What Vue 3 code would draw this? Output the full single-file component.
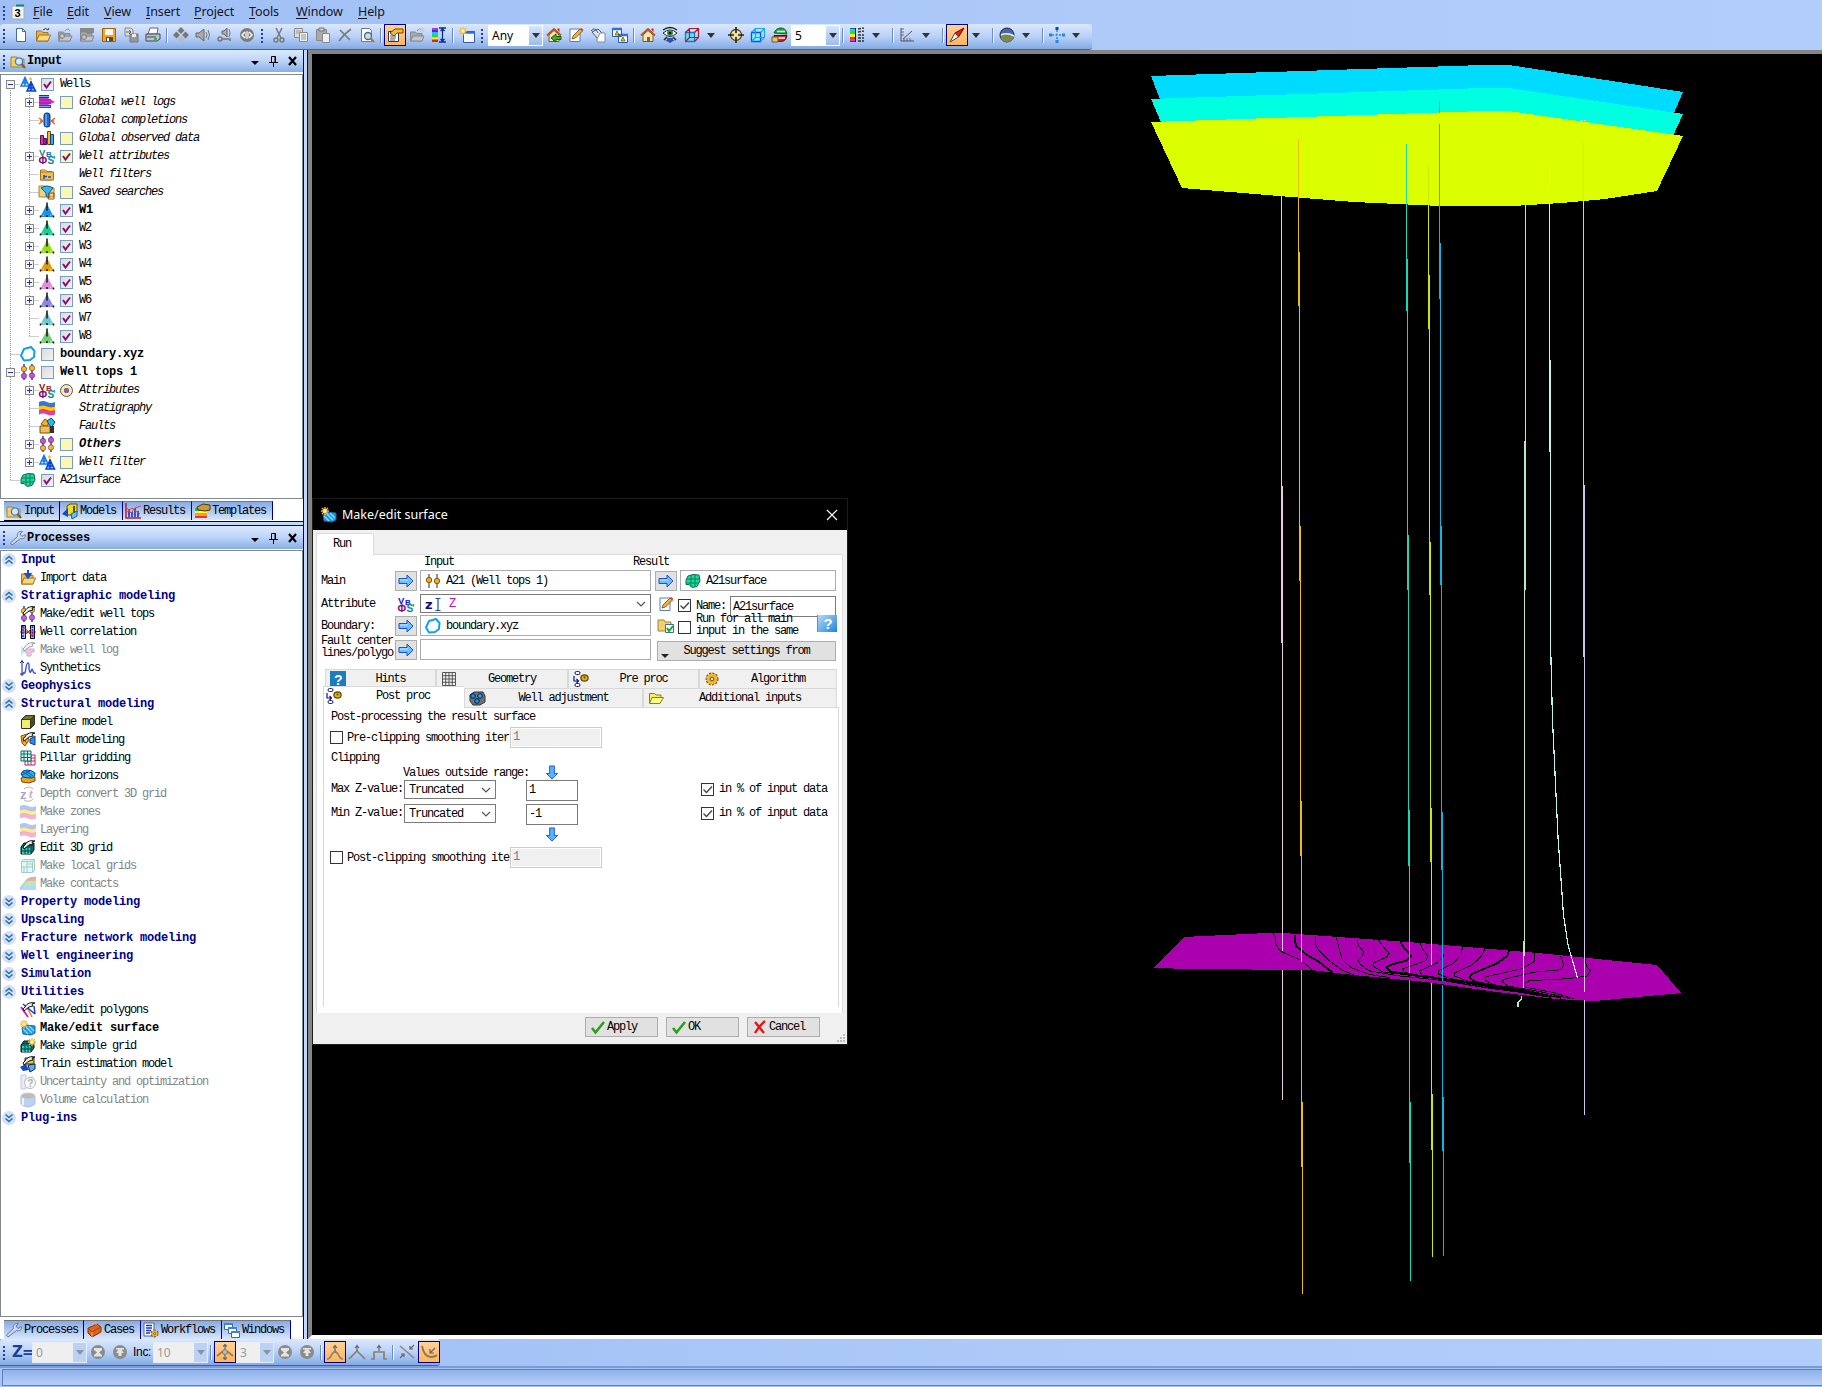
<script setup>
const derrick = (c) => `<path d="M8 3.500L2.500 14M8 3.500L13.500 14M6 7.500h4M5 9.800h6M4 12h8M1.500 14.200h13M6.500 7l4 3M9.500 7l-4 3M5 10l6 3.500M11 10l-6 3.500" stroke="${c}" stroke-width="1.500" fill="none"/><path d="M8 .5v8M8 13v2M1.500 13.500v2M14.500 13.500v2" stroke="#111" stroke-width="1.500"/>`
const wells2 = `<path d="M5 1.500L1 10h8zM5 1v9M2.500 7h5M3.500 4.500h3" stroke="#1277ee" stroke-width="1.500" fill="none"/><path d="M11 6L7 15h8.500zM11 5v10M8.500 12h5M9.500 9h3" stroke="#0a3fd0" stroke-width="1.500" fill="#7fd0ff"/><circle cx="10.500" cy="2.800" r="1.500" fill="#ffc020"/>`
const beads = (a, b) => `<path d="M4 0v16M12 0v16" stroke="#25b" stroke-width="1.600"/><circle cx="4" cy="5" r="2.700" fill="${a}" stroke="#633" stroke-width=".6"/><circle cx="12" cy="4" r="2.700" fill="${a}" stroke="#633" stroke-width=".6"/><circle cx="4" cy="12" r="2.700" fill="${b}" stroke="#536" stroke-width=".6"/><circle cx="12" cy="11.500" r="2.700" fill="${b}" stroke="#536" stroke-width=".6"/>`
const attrs = (a, b, c, d) => `<g font-family="Liberation Sans" font-weight="bold"><text x="0" y="7.500" font-size="9.500" fill="${a}">V</text><text x="7" y="8.500" font-size="8" fill="${b}">B</text><text x="-.5" y="16" font-size="10.500" fill="${c}">Φ</text><text x="8.500" y="16" font-size="10" fill="${d}">S'</text></g>`
const folder = (c1, c2) => `<path d="M1.500 14V4h5l1.500 1.500h5V14z" fill="${c1}" stroke="#a27420"/><path d="M1.500 14L4 8h11.500L13 14z" fill="${c2}" stroke="#a27420"/>`
const grayFolder = `<path d="M1.500 14V5h5l1.500 1.500h5V14z" fill="#a5a9b0" stroke="#85898f"/><path d="M1.500 14L4 9h11L13 14z" fill="#c3c7cd" stroke="#85898f"/><path d="M8 4c2-3 4-2 5 0" stroke="#888" fill="none"/>`
const hammer = `<path d="M5 5c2-4 6-5 10-4l-3 1 1 2-4 1-5 4-1-2z" fill="#eee" stroke="#111"/>`
const spark = (x, y) => `<path d="M${x - 4} ${y}h8M${x} ${y - 4}v8M${x - 3} ${y - 3}l6 6M${x + 3} ${y - 3}l-6 6" stroke="#f2bd3c" stroke-width="1.400"/><circle cx="${x}" cy="${y}" r="1.700" fill="#fff3b0"/>`
const grid3d = `<path d="M1 14V7l3-4h10v7l-3 4z" fill="#0e6f66" stroke="#111"/><path d="M2 8h9v6H2z" fill="#25cfc4"/><path d="M5 8v6M8 8v6M1 11h10M11 7v7M3 5.500h10" stroke="#063f3b"/>`
const gear = (x, y, r) => `<circle cx="${x}" cy="${y}" r="${r}" fill="#e4a428" stroke="#7b4b08" stroke-width="2" stroke-dasharray="2 1.200"/><circle cx="${x}" cy="${y}" r="${r}" fill="#efb535"/><circle cx="${x}" cy="${y}" r="${r / 3}" fill="#fff2c0" stroke="#7b4b08"/>`
const strata = `<path d="M0 2q4-2 8 0t8 0v5q-4 2-8 0T0 7z" fill="#2b7bea"/><path d="M0 6q4-2 8 0t8 0v5q-4 2-8 0t-8 0z" fill="#ffc814"/><path d="M0 10.500q4-2 8 0t8 0v4q-4 2-8 0t-8 0z" fill="#e53fa8"/><path d="M0 10.500q4-2 8 0t8 0M0 6q4-2 8 0t8 0" stroke="#a33c10" fill="none" stroke-width=".7"/>`
const house = `<path d="M3 8v6.500h10V8L8 3.500z" fill="#f6e4b4" stroke="#7a5a2a"/><path d="M1 8.500L8 2l7 6.500" stroke="#b3541c" stroke-width="1.800" fill="none"/><path d="M11.500 1.500h2V5l-2-2z" fill="#d02020"/><path d="M7 10h3v4.500H7z" fill="#8a5a2a"/>`
const note = `<path d="M2 2h10v12.500H2z" fill="#fff" stroke="#5d7fa8"/><path d="M4 12l1-3 7-7 2.500 2-7 7z" fill="#f2b13a" stroke="#6b4a12" stroke-width=".8"/><path d="M12 2l1.500-1 2 2-1 1z" fill="#d33"/>`
const disc = (d) => `<circle cx="8" cy="8" r="7" fill="#8b8b8b"/><path d="${d}" fill="#e3e3e3"/>`
const surf = `<path d="M2 8l4-3 9 1v7l-4 2-8-1z" fill="#1f9be0" stroke="#1363a8"/><path d="M3 9l5 5M6 7l6 6M9 6l5 5" stroke="#8fdcff" stroke-width="1.200"/>` + spark(4, 4)
const peak = (d) => `<path d="${d}" stroke="#8a8170" stroke-width="1.700" fill="none"/><path d="M8 7V2M6 4l2-2.500L10 4" stroke="#666" fill="none" stroke-width="1.200"/>`
const cubeWire = (a, b, f) => `<path d="M1.500 5.500h9v9h-9z" fill="${f}" stroke="${a}" stroke-width="1.300"/><path d="M1.500 5.500l4-4h9v9l-4 4M14.500 1.500l-4 4M5.500 1.500v9h9M5.500 10.500l-4 4" stroke="${b}" stroke-width="1.200" fill="none"/>`
const magnet = `<path d="M1 4h6l1 2h6v8H1z" fill="#f3cf6c" stroke="#a5822e"/><circle cx="9" cy="8.500" r="3.600" fill="#cfeaff" stroke="#4a7fb8" stroke-width="1.400"/><path d="M11.500 11l3.500 4" stroke="#7a5a3a" stroke-width="2"/>`
const proc = `<rect x="2" y=".5" width="5" height="3" rx="1.500" fill="#fff" stroke="#14147a"/><rect x="2" y="12.500" width="5" height="3" rx="1.500" fill="#fff" stroke="#14147a"/><path d="M1 5v5h4M3.500 8l2 2-2 2" stroke="#14147a" fill="none" stroke-width="1.200"/><ellipse cx="11.500" cy="7" rx="3.600" ry="3" fill="#e0b21c" stroke="#6d5206" stroke-width="1.400"/><circle cx="11.500" cy="6.500" r="1" fill="#5d4503"/>`

const icons = {
  wells: wells2,
  logs: `<path d="M0 1h10v3H0z" fill="#1c2fa8"/><path d="M0 4h9l7 4-7 3H0z" fill="#e02fb4"/><path d="M0 6h12M0 9h12" stroke="#7a1ec0"/><path d="M0 11h12v3H0z" fill="#2446c8"/><path d="M0 2.500h10M0 12.500h11" stroke="#55b6ff"/>`,
  compl: `<rect x="5" y="1" width="6" height="14" rx="2.500" fill="#1670d8" stroke="#0b3170"/><path d="M7 2v12" stroke="#8ed0ff"/><path d="M0 6l4 3-4 3M1 9h3M16 6l-4 3 4 3M15 9h-3" stroke="#f0601c" stroke-width="1.300" fill="none"/>`,
  bars: `<path d="M1.500 5.500h3v9h-3z" fill="#e52bb0" stroke="#5a1350"/><path d="M4.500 8.500h3v6h-3z" fill="#8a1fb0" stroke="#3b1050"/><path d="M8.500 1.500h3v13h-3z" fill="#ffb61c" stroke="#734a00"/><path d="M11.500 4.500h3v10h-3z" fill="#2fb0ff" stroke="#0b4070"/>`,
  attr: attrs('#0a8a8a', '#0f74c8', '#7a0a7a', '#0a8a8a'),
  attr2: attrs('#8a0f0f', '#b02020', '#7a0a7a', '#0a8a8a'),
  attr3: attrs('#1010e0', '#1010e0', '#8a0a7a', '#0a8a8a'),
  filters: folder('#f7dc8c', '#f2c04c').replace('M1.500 14L4 8h11.500L13 14z', 'M1.500 14V6h13v8z') + `<path d="M5 9v4M5 10.500h3M9 11h3" stroke="#2050c0" stroke-width="1.500"/>`,
  searches: `<path d="M0 2h6l1 2h8v9H0z" fill="#f0d082" stroke="#a58538"/><path d="M2 4q6-4 12 0l-4 5v5l-3-2V9z" fill="#38b4ea" stroke="#0c5c8c"/><path d="M9 15l1-6h5v6z" fill="none" stroke="#8a4a1a"/>`,
  w1: derrick('#1592e6'), w2: derrick('#12cf8e'), w3: derrick('#96dc10'), w4: derrick('#e29a08'),
  w5: derrick('#dc8cd8'), w6: derrick('#8886e0'), w7: derrick('#6cc8cc'), w8: derrick('#74cc74'),
  boundary: `<path d="M4 3l7-2 3.500 4-.5 6-4 3-6 .5-3-5z" fill="none" stroke="#12a0ee" stroke-width="2" stroke-linejoin="round"/>`,
  tops: beads('#f5b820', '#c84fd8'),
  tops2: beads('#c84fd8', '#f5b820'),
  tops3: `<path d="M4 1v14M12 1v14" stroke="#666" stroke-width="1.400"/><circle cx="4" cy="7" r="2.700" fill="#f0ae20" stroke="#8a5a08"/><circle cx="12" cy="8" r="2.700" fill="#f0ae20" stroke="#8a5a08"/>`,
  strata,
  faults: `<path d="M2 6l4-5 4 3-2 5z" fill="#f5b31c" stroke="#7d5300"/><path d="M8 3l4-3 4 4-4 6z" fill="#2eb6ea" stroke="#0b4d73"/><path d="M1 8h10v7H1z" fill="#f0bd62" stroke="#7d5300"/><path d="M11 8h4v7h-4z" fill="#333"/>`,
  surface: `<path d="M3 3l5-1.500 6 .5 1 6-3 5.500-5 1-3-3H1V7z" fill="#20d79a" stroke="#0b6b50"/><path d="M6 2v12M10 2v12M2 6h13M2 10h12" stroke="#0c7f5e"/>`,
  input: magnet,
  models: `<path d="M5 3l3-2h7v8l-3 3H5z" fill="#f0dc28" stroke="#5c5006"/><path d="M12 3v8" stroke="#5c5006" stroke-width="2"/><path d="M0 11l6-6v9z" fill="#124bd0"/><path d="M9 11l6-3v5l-5 3z" fill="#6bbdf5" stroke="#1b5c9c"/>`,
  results: `<path d="M1 0v15h15" stroke="#c01818" fill="none" stroke-width="1.500"/><path d="M4 14V6M7 14V9M10 14V5M13 14V8" stroke="#1531d0" stroke-width="1.600"/><path d="M1 4l5 6 4-5 6-2M1 10l6-5 8 6" stroke="#e04040" fill="none"/>`,
  templates: `<path d="M1 5h12v10H1z" fill="#e33"/><path d="M1 5h12v3H1z" fill="#2b4"/><path d="M1 8h12v2.500H1z" fill="#ff3"/><path d="M1 10.500h12V13H1z" fill="#f93"/><path d="M3 4l6-3 7 1v5l-5 1-7-1z" fill="#c79a3a" stroke="#4d3405"/>`,
  wrench: `<path d="M2 15l-1.500-2 7-6.500c-1-3 1.500-6 5-5L10 4l2 2.500 3.500-2c.5 3.500-2.500 5-5 4z" fill="#cdd8ea" stroke="#6679a0"/>`,
  cases: `<path d="M2 6l9-4 4 3v5l-9 5-4-4z" fill="#e2601a" stroke="#86300a"/><path d="M2 6l4 3 9-4M6 9v6M6 4V1.500l4-1V3" stroke="#ffa868" fill="none"/><path d="M2 6l4 3.500 9-4.500" stroke="#86300a" fill="none"/>`,
  flows: `<path d="M1 1h10v13H1z" fill="#fff" stroke="#4668a8"/><path d="M3 3.500h6M3 6h6M3 8.500h5M3 11h4" stroke="#2032c0" stroke-width="1.500"/>` + gear(11.5, 11.5, 3),
  windows: `<g fill="#fff" stroke="#3868b8"><path d="M.5 1.500h8v6h-8z"/><path d="M4.500 5.500h8v6h-8z"/><path d="M7.500 9.500h8v6h-8z"/></g><path d="M0 2h9M4 6h9M7 10h9" stroke="#3f7fe0" stroke-width="2"/>`,
  imp: folder('#e8bb5c', '#f8d67c') + `<path d="M8 0v5M5.500 4L8 7.500 10.500 4z" stroke="#1f52b8" stroke-width="2" fill="#1f52b8"/>`,
  mtops: beads('#f5c820', '#c060d8') + hammer,
  corr: `<path d="M1.500 1.500h4v13h-4z" fill="#9cc4ff" stroke="#000"/><path d="M10.500 1.500h4v13h-4z" fill="#9cc4ff" stroke="#000"/><path d="M3 2v12M12.500 2v12" stroke="#3038d0" stroke-width="1.500" stroke-dasharray="2 1"/><path d="M1 4h4l6 7h4M5 11L11 5M0 8h16" stroke="#b01414" fill="none"/>`,
  mlog: `<path d="M1 4l5 4-5 6z" fill="#5cd4f0"/><path d="M5 7h9v3h-3v4H7v-4H5z" fill="#dc70d0" stroke="#803080"/>` + hammer,
  synth: `<path d="M2 0v16M0 3l2-2 2 2M0 14h4" stroke="#142090" fill="none"/><path d="M3 12q1.500 3 2.500-1 1-8 2.500-8t1 6q1 6 2.500 1 .7-2 1.500 1t3 2" stroke="#3c50e0" stroke-width="1.400" fill="none"/>`,
  cube: `<path d="M1.500 5.500h9v9h-9z" fill="#f0ee6c" stroke="#333"/><path d="M1.500 5.500l4-4h9l-4 4z" fill="#77772c" stroke="#333"/><path d="M10.500 5.500l4-4v9l-4 4z" fill="#4c4c18" stroke="#333"/>`,
  fault: `<path d="M1 4l6-2 2 6-4 6-3-3z" fill="#f4b02a" stroke="#8a5000"/><path d="M10 7l5-3v9l-5-2z" fill="#2e8ae8" stroke="#0e3c88"/><path d="M3 5l4 7M6 4l-3 6" stroke="#a85c08"/>` + hammer,
  pillar: `<path d="M5 5h10v10H5z" fill="#fff" stroke="#b0208a"/><path d="M8 5v10M11 5v10M5 8h10M5 11h10" stroke="#d02050"/><path d="M1 1h10v10H1z" fill="#d4f4ee" stroke="#0b6f66"/><path d="M4 1v10M7.500 1v10M1 4h10M1 7.500h10" stroke="#0b6f66"/>`,
  horizons: `<path d="M1 10l5-3 9 2v4l-6 2-7-1z" fill="#f0a21c" stroke="#7d4b00"/><path d="M1 6q1-4 6-4t8 3q0 5-4 5t-8-1z" fill="#28b2ee" stroke="#09457c"/><path d="M3 4l8 5M6 3l7 5M2 7l8-4" stroke="#09579c"/>`,
  depth: `<text x="0" y="13" font-family="Liberation Sans" font-weight="bold" font-size="13" fill="#1c1c80">z</text><text x="9" y="12" font-family="Liberation Serif" font-weight="bold" font-style="italic" font-size="13" fill="#a02060">t</text><path d="M4 3q5-4 9 0M4 14q5 3 9-1" stroke="#444" fill="none"/>`,
  edit3d: grid3d + hammer,
  lgrid: `<path d="M1.500 3.500l2-2h11v11l-2 2h-11z" fill="#b8f0ec" stroke="#1a8078"/><path d="M1.500 3.500h11v11M12.500 3.500l2-2M7 3.500v11M1.500 9h11M4 9v5M7 6h5" stroke="#1a8078" fill="none"/>`,
  contacts: `<path d="M5 5q4-5 11-4v4z" fill="#e03030"/><path d="M2 9l3-4h11v5H1z" fill="#50cc40"/><path d="M0 13l1-3h15v4H0z" fill="#40a0ff"/><path d="M0 13q4-9 16-12" stroke="#555" fill="none"/>`,
  poly: `<path d="M1 5l7 10" stroke="#d820c8" stroke-width="2"/><path d="M6 3l6 12" stroke="#f08020" stroke-width="1.500"/><path d="M3 2l12 10M14 4l1 8" stroke="#2038d8" stroke-width="1.500"/>` + hammer,
  surf,
  sgrid: grid3d + spark(12, 4),
  train: `<path d="M5 2h9v6H5z" fill="#dccf28" stroke="#333"/><path d="M0 11l6-3 3 6-6 1z" fill="#1648c8"/><path d="M8 9l7-1v5l-5 3z" fill="#58b0f4" stroke="#124"/>` + hammer,
  uncert: `<path d="M1 1h5v14H1z" fill="#bcd0f4" stroke="#6c7cb8"/><path d="M9 2h5v3H9z" fill="#b8e8a8"/><circle cx="10" cy="9" r="5.500" fill="#eee" stroke="#555"/><text x="7.300" y="12.500" font-family="Liberation Sans" font-weight="bold" font-size="10" fill="#333">?</text>`,
  volume: `<path d="M1 4v8q7 6 14 0V4z" fill="#4f90e8" stroke="#375fa8"/><ellipse cx="8" cy="4" rx="7" ry="3" fill="#555" stroke="#789"/><path d="M3 6v7" stroke="#cfe6ff" stroke-width="2"/>`,
  // main toolbar
  new: `<path d="M3.500 1.500h6l3 3v10h-9z" fill="#fff" stroke="#4a6a94"/><path d="M9.500 1.500v3h3" fill="none" stroke="#4a6a94"/>`,
  open: folder('#e5b04a', '#fbd778') + `<path d="M8 3q3-3 5 0l1-2" stroke="#333" fill="none"/>`,
  gopen: grayFolder + `<path d="M2 9h6M5 6v6" stroke="#666" stroke-width="2.400"/><path d="M2.500 9h5M5 6.500v5" stroke="#eee"/>`,
  gopen2: `<path d="M1 1h14v5H1z" fill="#888"/>` + grayFolder + `<path d="M2 10h6M5 7v6" stroke="#666" stroke-width="2.400"/><path d="M2.500 10h5M5 7.500v5" stroke="#eee"/>`,
  save: `<path d="M1.500 1.500h13v13h-13z" fill="#f0a818" stroke="#a86404"/><path d="M4 2h8v6H4z" fill="#f4f8ff"/><path d="M5 10h7v4.500H5z" fill="#5c4630"/><path d="M6 11h2v3H6z" fill="#fff"/>`,
  saveas: `<path d="M2 1h6l2 2v6H2z" fill="#ddd" stroke="#888"/><path d="M7 7h8v8H7z" fill="#999" stroke="#777"/><path d="M9 7h4v3H9z" fill="#eee"/><path d="M3 5h5M6 3l2 2-2 2" stroke="#666" fill="none"/>`,
  print: `<path d="M5 1h8l-1 6H3z" fill="#fff" stroke="#667"/><path d="M1 7h14v5l-3 2H1z" fill="#b8c2d4" stroke="#445"/><path d="M2 10h9" stroke="#445"/><path d="M9 12h3" stroke="#2c2" stroke-width="2"/>`,
  diam: `<path d="M8 0l3.500 3.500L8 7 4.500 3.500zM3.500 4.500L7 8l-3.500 3.500L0 8zM12.500 4.500L16 8l-3.500 3.500L9 8z" fill="#777"/><path d="M8 9l3.500 3.500L8 16l-3.500-3.500z" fill="#bbb"/>`,
  horn: `<path d="M1 6h3l5-4v12l-5-4H1z" fill="#aaa" stroke="#666"/><path d="M11 5q2 3 0 6M13 3q3 5 0 10" stroke="#777" fill="none"/>`,
  horn2: `<path d="M5 4h2l3-3v9L7 7H5z" fill="#aaa" stroke="#666"/><path d="M12 2q2 4 0 8" stroke="#777" fill="none"/><circle cx="3" cy="12" r="2" fill="none" stroke="#777" stroke-width="1.500"/><path d="M5 12h8v2" stroke="#777" fill="none" stroke-width="1.500"/>`,
  rot: `<circle cx="8" cy="8" r="7" fill="#7d7d7d"/><path d="M6 5L3 8l3 3M10 5l3 3-3 3" fill="none" stroke="#fff" stroke-width="1.400"/><ellipse cx="8" cy="8" rx="2" ry="4" fill="#ccc"/>`,
  cut: `<path d="M5 1l5 10M11 1L6 11" stroke="#777" stroke-width="1.500"/><circle cx="5" cy="13" r="2" fill="none" stroke="#777" stroke-width="1.400"/><circle cx="11" cy="13" r="2" fill="none" stroke="#777" stroke-width="1.400"/>`,
  copy: `<path d="M1.500 1.500h8v9h-8z" fill="#ddd" stroke="#888"/><path d="M6.500 5.500h8v9h-8z" fill="#eee" stroke="#888"/><path d="M8 8h5M8 10h5M8 12h5M3 4h5M3 6h3" stroke="#999"/>`,
  paste: `<path d="M1.500 2.500h10v11h-10z" fill="#aaa" stroke="#888"/><path d="M4 1h5v3H4z" fill="#ccc" stroke="#777"/><path d="M7.500 6.500h7v9h-7z" fill="#eee" stroke="#888"/>`,
  del: `<path d="M3 3l10 10M14 2Q7 7 2 14" stroke="#7c7c7c" stroke-width="1.700" fill="none"/>`,
  preview: `<path d="M2.500 1.500h8l2 2v11h-10z" fill="#fff" stroke="#6d7b8c"/><circle cx="9" cy="9" r="3.500" fill="#bfe0f8" stroke="#567" stroke-width="1.300"/><path d="M11.500 11.500L15 15" stroke="#b07028" stroke-width="2"/>`,
  props: `<path d="M1.500 4.500h10v10h-10z" fill="#fff" stroke="#334"/><path d="M3 9h6M3 11h6M3 13h5" stroke="#557"/><path d="M3 6l5-4h8v4h-6l-3 3z" fill="#f0ba48" stroke="#6b4508"/>`,
  gnew: grayFolder + `<path d="M10 3h6M13 0v6M11 1l4 4M15 1l-4 4" stroke="#ccc"/>`,
  cmap: `<path d="M1 1h6v2.500H1z" fill="#e020d0"/><path d="M1 3h6v2.500H1z" fill="#2040f0"/><path d="M1 5.500h6V8H1z" fill="#10d0e0"/><path d="M1 8h6v2.500H1z" fill="#30d820"/><path d="M1 10.500h6V13H1z" fill="#f8f010"/><path d="M1 12.500h6V15H1z" fill="#e82020"/><path d="M8 1h7M8 15h7M11.500 2v12M9.500 4l2-2 2 2M9.500 12l2 2 2-2" stroke="#0c2c88" fill="none" stroke-width="1.300"/>`,
  nwin: `<path d="M4.500 4.500h11v11h-11z" fill="#f4f9ff" stroke="#345ca8"/><path d="M4 5.500h12" stroke="#2c6ad8" stroke-width="2.400"/>` + spark(4, 4),
  homeb: house + `<path d="M5 11l5-4v2.500h5v3h-5V15z" fill="#3cb41c" stroke="#1c5c0c"/>`,
  note,
  bucket: `<path d="M2 5l6-3 5 5-5 5z" fill="#dde6f2" stroke="#556"/><path d="M1 4q4-5 7 2" fill="none" stroke="#556"/><path d="M10 6h5v9H7v-3z" fill="#fff" stroke="#889"/>`,
  wins: `<path d="M.5 1.500h9v8h-9zM6.500 7.500h9v8h-9z" fill="#fff" stroke="#245ab0"/><path d="M0 2h10M6 8h10" stroke="#2f6fdc" stroke-width="2.400"/><path d="M3 8l2-4 2 4zM9 14l2-4 2 4z" fill="#f3c800" stroke="#554400" stroke-width=".7"/>`,
  home: house,
  eye: `<path d="M1 6q7-6 14 0-7 7-14 0z" fill="#fff" stroke="#223"/><circle cx="8" cy="6" r="3" fill="#2f9c28"/><circle cx="8" cy="6" r="1.300" fill="#000"/><path d="M1 3q7-5 14 0M2 13l3-3M14 13l-3-3" stroke="#223" fill="none" stroke-width="1.500"/><path d="M5 11h6v2h2l-5 3-5-3h2z" fill="#2c4fb8"/>`,
  cubew: cubeWire('#1a78b8', '#b01830', '#6adcf8'),
  target: `<circle cx="8" cy="8" r="5.500" fill="#f0dca0" stroke="#5c4008" stroke-width="1.300"/><path d="M8 0v6M8 10v6M0 8h6M10 8h6" stroke="#222" stroke-width="1.600"/>`,
  cubeb: cubeWire('#0a4cf0', '#10a8f0', '#80f4ff'),
  rg: `<path d="M2 6q2-5 7-5t6 6z" fill="#1ca830" stroke="#063"/><path d="M2 8.500h13q-1 6-6.500 6T2 8.500z" fill="#e02818" stroke="#600"/><path d="M5 4.500h8M5 11h8" stroke="#fff" stroke-width="1.400"/><path d="M0 10h6v5H0z" fill="#e8c860" stroke="#654"/>`,
  legend: `<path d="M1 1h6v14H1z" fill="#111"/><path d="M1 1.500h5v3H1z" fill="#20c8f0"/><path d="M1 4h5v3H1z" fill="#28e030"/><path d="M1 7h5v3H1z" fill="#f4f020"/><path d="M1 10h5v2.500H1z" fill="#f03020"/><path d="M1 12h5v2.500H1z" fill="#e030d8"/><path d="M9 2l6-1M9 5l6-1M9 8h6M9 11h6M9 14h6" stroke="#333" stroke-width="1.400" stroke-dasharray="3 1"/>`,
  axis: `<path d="M2 1v13h13M4 12l9-8" stroke="#555" fill="none"/><path d="M2 2h3M2 5h3M2 8h3M5 14v-3M8 14v-3M11 14v-3" stroke="#555" stroke-width=".8"/>`,
  compass: `<path d="M15 1L9.500 10 6 6z" fill="#f01c10" stroke="#700"/><path d="M1 15l5-9 3.500 4z" fill="#fff" stroke="#444"/>`,
  globe: `<circle cx="8" cy="8" r="7" fill="#4868b0" stroke="#223"/><path d="M1.500 9q7-3 13.500 0-1 6-7 6t-6.500-6z" fill="#7a8a48"/><path d="M2 8q6-3 13 1" stroke="#f0f4ff" fill="none" stroke-width="1.500"/>`,
  pts: `<path d="M8 3v10M3 8h10" stroke="#1c90f0" stroke-width="1.500" stroke-dasharray="2 1.500"/><path d="M6.500 0h3v3h-3z" fill="#134a80"/><path d="M6.500 13h3v3h-3zM0 6.500h3v3H0zM13 6.500h3v3h-3z" fill="#1c88f4"/>`,
  // bottom toolbar
  down: disc('M4 4h8v2L9 8.500 12 11v1.500H4V11l3-2.500L4 6z'),
  up: disc('M4 4h8v1.500H9.500L12 9H9.500v3h-3V9H4l2.500-3.500H4z'),
  bead: `<path d="M0 12l5-4h6l5 4" stroke="#9a8050" stroke-width="2" fill="none"/><circle cx="8" cy="8" r="2.500" fill="#bbb" stroke="#777"/><path d="M8 0v5M6 2.500L8 .5l2 2M8 11v5M6 13.500l2 2 2-2" stroke="#666" fill="none" stroke-width="1.200"/>`,
  p1: peak('M0 15q3 0 5-5l3-3 3 3q2 5 5 5'), p2: peak('M0 15l8-8 8 8'), p3: peak('M0 15h3V8h10v7h3'),
  snap: `<path d="M1 2l14 12" stroke="#888" stroke-width="1.600"/><path d="M15 1l-4 4M11 2v3h3M1 14l4-4M2 10h3v3" stroke="#666" fill="none" stroke-width="1.200"/>`,
  curve: `<path d="M1 2q2 11 9 11 4 0 6-2" stroke="#8c7a50" stroke-width="1.800" fill="none"/><path d="M14 4L9 9M9 5v4h4" stroke="#666" fill="none" stroke-width="1.200"/>`,
  // dialog
  arrow: `<path d="M1 5.500h8V2l6 6-6 6v-3.500H1z" fill="#6cc0ff" stroke="#1a50d0"/><path d="M2 7h8" stroke="#c4e8ff"/>`,
  darrow: `<path d="M5.500 1h5v8H14l-6 6-6-6h3.500z" fill="#58b4ff" stroke="#1a50d0"/>`,
  zi: `<text x="0" y="13" font-family="DejaVu Sans" font-weight="bold" font-size="13" fill="#0c0c80">z</text><path d="M10.500 2.500h5M10.500 14.500h5M13 2v12" stroke="#1c4ca8" stroke-width="1.200"/>`,
  foldck: `<path d="M0 2h6l1 2h6v9H0z" fill="#f2cf70" stroke="#a5822e"/><path d="M7.500 6.500h8v8h-8z" fill="#fff" stroke="#3c6cb0"/><path d="M9 10l2 3 4-5" stroke="#14a814" stroke-width="2" fill="none"/>`,
  help: `<path d="M0 0h16v16H0z" fill="#1c7cc0"/><text x="4" y="13.500" font-family="Liberation Sans" font-weight="bold" font-size="14" fill="#fff">?</text>`,
  mesh: `<path d="M1.500 1.500h13v13h-13zM4.700 1v14M8 1v14M11.300 1v14M1 4.700h14M1 8h14M1 11.300h14" stroke="#555" fill="none"/>`,
  proc,
  gear: gear(8, 8, 5.5),
  adjust: `<path d="M1 5l4-3h9l2 4v6l-5 3H4l-3-4z" fill="#6c7078" stroke="#333"/><circle cx="4" cy="6" r="2.300" fill="#2090f0" stroke="#024"/><circle cx="11" cy="6" r="2.300" fill="#30a0f8" stroke="#024"/><circle cx="8" cy="11" r="2.300" fill="#2090f0" stroke="#024"/>`,
  yfold: `<path d="M1.500 13V3.500h5L8 5h5v3" fill="#f8ee60" stroke="#8c8010"/><path d="M1.500 13.500L4 7.500h11.500L12 13.500z" fill="#fffb8c" stroke="#8c8010"/>`,
  ok: `<path d="M2 9l3.500 4.500L14 3" stroke="#2ca01c" stroke-width="2.600" fill="none"/>`,
  no: `<path d="M3 3l9 11M13 2Q7 7 3 14" stroke="#e01818" stroke-width="2.400" fill="none"/>`,
}

const menu = [['File', 34], ['Edit', 37], ['View', 42], ['Insert', 48], ['Project', 55], ['Tools', 47], ['Window', 62], ['Help', 40]]

const i = (...names) => names.map((n) => ({ k: 'icon', n }))
const a = (n) => [{ k: 'icon', n, on: true }]
const sep = { k: 'sep' }, grip = { k: 'grip' }, caret = { k: 'caret' }, gap = { k: 'gap' }
const mainBar = [
  grip, ...i('new', 'open', 'gopen', 'gopen2', 'save', 'saveas', 'print'), sep, ...i('diam', 'horn', 'horn2', 'rot'),
  grip, ...i('cut', 'copy', 'paste', 'del', 'preview'), sep, ...a('props'), ...i('gnew', 'cmap'), sep, ...i('nwin'),
  grip, { k: 'combo', v: 'Any', w: 55 }, ...i('homeb', 'note', 'bucket', 'wins'), sep, ...i('home', 'eye', 'cubew'), caret, gap,
  ...i('target', 'cubeb', 'rg'), { k: 'combo', v: '5', w: 49 }, sep, ...i('legend'), caret, gap, sep, ...i('axis'), caret, gap, sep,
  ...a('compass'), caret, gap, sep, ...i('globe'), caret, gap, sep, ...i('pts'), caret,
]
const bottomBar = [
  grip, { k: 'z', v: 'Z=', w: 22 }, { k: 'combo', v: '0', w: 55, off: true }, ...i('down', 'up'), { k: 'label', v: 'Inc:', w: 22 },
  { k: 'combo', v: '10', w: 55, off: true }, sep, ...a('bead'), { k: 'combo', v: '3', w: 38, off: true }, ...i('down', 'up'), sep,
  ...a('p1'), ...i('p2', 'p3'), sep, ...i('snap'), ...a('curve'),
]

const tree = [
  { l: 0, n: 'wells', c: 'on', t: 'Wells', x: '-', top: true },
  { l: 1, n: 'logs', c: 'y', t: 'Global well logs', x: '+', it: true },
  { l: 1, n: 'compl', t: 'Global completions', it: true },
  { l: 1, n: 'bars', c: 'y', t: 'Global observed data', it: true },
  { l: 1, n: 'attr', c: 'yon', t: 'Well attributes', x: '+', it: true },
  { l: 1, n: 'filters', t: 'Well filters', it: true },
  { l: 1, n: 'searches', c: 'y', t: 'Saved searches', it: true },
  ...[1, 2, 3, 4, 5, 6, 7, 8].map((k) => ({ l: 1, n: 'w' + k, c: 'on', t: 'W' + k, x: k < 7 ? '+' : '', b: k === 1, end: k === 8 })),
  { l: 0, n: 'boundary', c: 'off', t: 'boundary.xyz', b: true },
  { l: 0, n: 'tops', c: 'off', t: 'Well tops 1', b: true, x: '-' },
  { l: 1, n: 'attr2', c: 'radio', t: 'Attributes', x: '+', it: true },
  { l: 1, n: 'strata', t: 'Stratigraphy', it: true },
  { l: 1, n: 'faults', t: 'Faults', it: true },
  { l: 1, n: 'tops2', c: 'y', t: 'Others', x: '+', it: true, b: true },
  { l: 1, n: 'wells', c: 'y', t: 'Well filter', x: '+', it: true, end: true },
  { l: 0, n: 'surface', c: 'on', t: 'A21surface', end: true },
]

const processes = [
  { h: 'Input', o: 1 }, { t: 'Import data', n: 'imp' },
  { h: 'Stratigraphic modeling', o: 1 }, { t: 'Make/edit well tops', n: 'mtops' }, { t: 'Well correlation', n: 'corr' },
  { t: 'Make well log', n: 'mlog', d: 1 }, { t: 'Synthetics', n: 'synth' },
  { h: 'Geophysics' },
  { h: 'Structural modeling', o: 1 }, { t: 'Define model', n: 'cube' }, { t: 'Fault modeling', n: 'fault' }, { t: 'Pillar gridding', n: 'pillar' },
  { t: 'Make horizons', n: 'horizons' }, { t: 'Depth convert 3D grid', n: 'depth', d: 1 }, { t: 'Make zones', n: 'strata', d: 1 },
  { t: 'Layering', n: 'strata', d: 1 }, { t: 'Edit 3D grid', n: 'edit3d' }, { t: 'Make local grids', n: 'lgrid', d: 1 }, { t: 'Make contacts', n: 'contacts', d: 1 },
  { h: 'Property modeling' }, { h: 'Upscaling' }, { h: 'Fracture network modeling' }, { h: 'Well engineering' }, { h: 'Simulation' },
  { h: 'Utilities', o: 1 }, { t: 'Make/edit polygons', n: 'poly' }, { t: 'Make/edit surface', n: 'surf', b: 1 }, { t: 'Make simple grid', n: 'sgrid' },
  { t: 'Train estimation model', n: 'train' }, { t: 'Uncertainty and optimization', n: 'uncert', d: 1 }, { t: 'Volume calculation', n: 'volume', d: 1 },
  { h: 'Plug-ins' },
]

const panelTabs = [['input', 'Input', 56], ['models', 'Models', 63], ['results', 'Results', 69], ['templates', 'Templates', 81]]
const processTabs = [['wrench', 'Processes', 80], ['cases', 'Cases', 57], ['flows', 'Workflows', 81], ['windows', 'Windows', 69]]
const tabs1 = [['help', 'Hints', 111], ['mesh', 'Geometry', 132], ['proc', 'Pre proc', 131], ['gear', 'Algorithm', 138]]
const tabs2 = [['proc', 'Post proc', 141], ['adjust', 'Well adjustment', 179], ['yfold', 'Additional inputs', 194]]

// contour lines on the lower surface, in local surface units
const contours = [
  'M373 71L380 84L378 96L387 116L400 127L450 150L482 180',
  'M491 80L491 102L500 120L530 152L565 180L600 196',
  'M550 83L556 110L566 147L590 172L640 193L700 203',
  'M608 86L612 106L626 126L624 135L612 148L614 160L640 182L720 197L850 212L960 232L1050 245',
  'M668 90L680 108L698 131L690 142L655 158L652 168L680 186L760 196L900 213L1000 230L1100 250L1180 262',
  'M785 98L790 115L806 138L800 152L770 164L736 176L738 186L800 200L900 220L1000 238L1060 246',
  'M847 103L849 140L830 160L782 183L790 195L900 215L1000 236L1150 262',
  'M903 108L900 133L880 158L837 182L835 192L870 206L970 225L1100 252',
  'M967 114L955 140L930 165L882 188L880 198L920 214L1040 236L1130 256',
  'M1104 127L1104 155L1070 176L970 200L965 210L990 224L1080 240L1180 265',
  'M1178 138L1186 165L1180 179L1100 187L1030 205L1012 214L1030 228L1120 245L1205 266',
  'M1247 148L1250 168L1262 184L1252 198L1200 206L1090 212L1074 222L1080 232L1160 248L1215 267',
]
const boldContours = [
  'M434 74L436 107L465 133L500 155L540 188',
  'M728 94L740 115L760 138L745 152L700 165L690 173L700 184L760 195L870 210L960 226L1060 242L1150 258',
  'M1033 122L1028 138L1000 160L930 192L922 203L940 216L1000 228L1100 246',
]
</script>

<template>
  <div class="app">
    <header class="menu">
      <span class="grip"></span>
      <svg class="logo" viewBox="0 0 14 16"><path d="M1 2h12v13H1z" fill="#f4f4f4" stroke="#aaa" /><path d="M5 1.500h8" stroke="#088" stroke-width="2" /><text x="3.500" y="13" font-size="11" font-weight="bold" font-family="Liberation Sans">3</text></svg>
      <span v-for="m in menu" :key="m[0]" class="mi" :style="{ width: m[1] + 'px' }"><u>{{ m[0][0] }}</u>{{ m[0].slice(1) }}</span>
    </header>

    <div class="bar main">
      <template v-for="(b, k) in mainBar" :key="k">
        <span v-if="b.k === 'icon'" class="slot" :class="{ on: b.on }"><svg class="ic" viewBox="0 0 16 16" v-html="icons[b.n]"></svg></span>
        <span v-else-if="b.k === 'combo'" class="combo" :class="{ off: b.off }" :style="{ width: b.w + 'px' }"><span>{{ b.v }}</span><i></i></span>
        <span v-else :class="b.k"></span>
      </template>
    </div>

    <main class="work">
      <aside class="left">
        <section class="panel top">
          <div class="head"><span class="grip"></span><svg class="ic" viewBox="0 0 16 16" v-html="icons.input"></svg><b>Input</b>
            <svg class="ctl" viewBox="0 0 50 16"><path d="M3 8h8l-4 4z" /><path d="M23.500 3.500h4v6h-4zM21 9.500h9M25.500 10v4" fill="none" stroke="#000" /><path d="M27 3v6" stroke="#000" /><path d="M41 4l7 8M48 4l-7 8" stroke="#000" stroke-width="2.200" /></svg>
          </div>
          <div class="body tree">
            <div v-for="(r, k) in tree" :key="k" class="row">
              <svg v-if="r.l" class="gut" viewBox="0 0 19 18"><path d="M9.500 0v18" class="dot" /></svg>
              <svg class="gut" viewBox="0 0 19 18">
                <path :d="(r.top ? 'M9.500 9' : 'M9.500 0') + (r.end ? 'V9' : 'V18') + 'M9.500 9.500H19'" class="dot" />
                <g v-if="r.x"><rect x="5.500" y="5.500" width="8" height="8" fill="#f4f4f2" stroke="#888" /><path :d="r.x === '+' ? 'M7 9.500h5M9.500 7v5' : 'M7 9.500h5'" stroke="#1c3c98" /></g>
              </svg>
              <svg class="ic" viewBox="0 0 16 16" v-html="icons[r.n]"></svg>
              <span class="ck" :class="r.c || 'none'">
                <svg v-if="r.c === 'on' || r.c === 'yon'" viewBox="0 0 13 13"><path d="M3 6l2.500 3.500L10 3.500" stroke="#80107c" stroke-width="2" fill="none" /></svg>
              </span>
              <span class="tx" :class="{ b: r.b, it: r.it }">{{ r.t }}</span>
            </div>
          </div>
          <div class="tabs">
            <span v-for="(t, k) in panelTabs" :key="t[0]" class="tab" :class="{ act: !k }" :style="{ width: t[2] + 'px' }"><svg class="ic" viewBox="0 0 16 16" v-html="icons[t[0]]"></svg>{{ t[1] }}</span>
          </div>
        </section>
        <div class="split"></div>
        <section class="panel bot">
          <div class="head"><span class="grip"></span><svg class="ic" viewBox="0 0 16 16" v-html="icons.wrench"></svg><b>Processes</b>
            <svg class="ctl" viewBox="0 0 50 16"><path d="M3 8h8l-4 4z" /><path d="M23.500 3.500h4v6h-4zM21 9.500h9M25.500 10v4" fill="none" stroke="#000" /><path d="M27 3v6" stroke="#000" /><path d="M41 4l7 8M48 4l-7 8" stroke="#000" stroke-width="2.200" /></svg>
          </div>
          <div class="body list">
            <div v-for="(p, k) in processes" :key="k" class="row">
              <template v-if="p.h">
                <svg class="chev" viewBox="0 0 14 14"><circle cx="7" cy="7" r="7" fill="#d6e0f2" /><path :d="p.o ? 'M3.500 6.500L7 3.500l3.500 3M3.500 10.500L7 7.500l3.500 3' : 'M3.500 3.500L7 6.500l3.500-3M3.500 7.500L7 10.500l3.500-3'" stroke="#1c70b0" stroke-width="1.500" fill="none" /></svg>
                <span class="tx b navy">{{ p.h }}</span>
              </template>
              <template v-else>
                <svg class="ic pi" :class="{ dim: p.d }" viewBox="0 0 16 16" v-html="icons[p.n]"></svg>
                <span class="tx" :class="{ b: p.b, gray: p.d }">{{ p.t }}</span>
              </template>
            </div>
          </div>
          <div class="tabs">
            <span v-for="(t, k) in processTabs" :key="t[0]" class="tab" :class="{ act: !k }" :style="{ width: t[2] + 'px' }"><svg class="ic" viewBox="0 0 16 16" v-html="icons[t[0]]"></svg>{{ t[1] }}</span>
          </div>
        </section>
      </aside>
      <div class="vsplit"></div>
      <div class="view">
        <svg class="scene" viewBox="312 54 1510 1281" shape-rendering="crispEdges">
          <path d="M1151 76L1483 65H1509L1683 92L1674 113L1160 99z" fill="#00dcff" />
          <path d="M1151 99L1483 88H1509L1683 114L1673 136L1161 122z" fill="#00ffe0" />
          <path d="M1151 122L1483 111H1509L1683 136L1657 191L1605 199L1561 203L1513 206H1441L1354 202L1279 196L1182 188z" fill="#dcff00" />
          <path d="M1153 968L1184 937L1267 933H1283L1408 942L1538 953L1657 965L1681 993L1595 1001L1556 999L1497 992L1426 982L1354 975L1311 970L1192 969z" fill="#aa00ad" />
          <g transform="translate(1140 910) scale(.3571 .3333)" fill="none" stroke="#000">
            <path v-for="c in contours" :key="c" :d="c" vector-effect="non-scaling-stroke" />
            <path v-for="c in boldContours" :key="c" :d="c" stroke-width="2" vector-effect="non-scaling-stroke" />
          </g>
          <g fill="none" stroke-width="1.200">
            <path d="M1281.500 162L1282.500 951M1282.500 970V1100" stroke="#eac8e6" />
            <path d="M1298.500 139L1301.500 962M1301.500 970L1302.500 1294" stroke="#f0bc10" />
            <path d="M1406.500 144L1409.500 973M1409.500 980L1410.500 1281" stroke="#10dcb8" />
            <path d="M1428.500 166L1431.500 965M1431.500 983L1432.500 1257" stroke="#cde800" />
            <path d="M1439.500 101V113M1439.500 124L1442.500 981M1442.500 985L1443.500 1256" stroke="#10b4e0" />
            <path d="M1525.500 153L1524.500 912L1523.500 988M1522 996L1521 1000L1518 1002V1007" stroke="#b8ecc0" />
            <path d="M1549.500 165L1550.500 640L1552.500 720L1558 837L1563.500 915L1568 945L1577.500 978" stroke="#bdf2ee" />
            <path d="M1583.500 142L1584.500 992M1584.500 1000V1115" stroke="#d4c4ee" />
            <path d="M1581 120.500h6" stroke="#e0c8f0" stroke-dasharray="2 1" />
          </g>
        </svg>

        <div class="dlg">
          <div class="dtitle"><svg class="ic" viewBox="0 0 16 16" v-html="icons.surf"></svg><span>Make/edit surface</span><svg class="close" viewBox="0 0 10 10"><path d="M0 0l10 10M10 0L0 10" stroke="#fff" stroke-width="1.100" /></svg></div>
          <div class="run">Run</div>
          <div class="page">
            <div class="r0"><span>Input</span><span>Result</span></div>
            <div class="form">
              <label>Main</label><span class="btn"><svg class="ic" viewBox="0 0 16 16" v-html="icons.arrow"></svg></span>
              <span class="field"><svg class="ic" viewBox="0 0 16 16" v-html="icons.tops3"></svg>A21 (Well tops 1)</span>
              <span class="btn"><svg class="ic" viewBox="0 0 16 16" v-html="icons.arrow"></svg></span>
              <span class="field res"><svg class="ic" viewBox="0 0 16 16" v-html="icons.surface"></svg>A21surface</span>
            </div>
            <div class="form fa">
              <label>Attribute</label><span class="nb"><svg class="ic" viewBox="0 0 16 16" v-html="icons.attr3"></svg></span>
              <span class="field dark"><svg class="ic" viewBox="0 0 16 16" v-html="icons.zi"></svg><em>Z</em><svg class="dd" viewBox="0 0 10 6"><path d="M1 1l4 4 4-4" stroke="#555" fill="none" stroke-width="1.200" /></svg></span>
              <span class="nb"><svg class="ic" viewBox="0 0 16 16" v-html="icons.note"></svg></span>
              <span class="cb"><svg viewBox="0 0 13 13"><path d="M2.500 6.500l3 3L11 3.500" /></svg></span><span class="nm">Name:</span><span class="field dark name">A21surface</span>
            </div>
            <div class="form fb">
              <label>Boundary:</label><span class="btn"><svg class="ic" viewBox="0 0 16 16" v-html="icons.arrow"></svg></span>
              <span class="field"><svg class="ic" viewBox="0 0 16 16" v-html="icons.boundary"></svg>boundary.xyz</span>
              <span class="nb"><svg class="ic" viewBox="0 0 16 16" v-html="icons.foldck"></svg></span>
              <span class="cb"></span><span class="two">Run for all main<br>input in the same</span><span class="q">?</span>
            </div>
            <div class="form fc">
              <label class="two">Fault center<br>lines/polygo</label><span class="btn"><svg class="ic" viewBox="0 0 16 16" v-html="icons.arrow"></svg></span>
              <span class="field"></span>
              <span class="btn sug"><i></i>Suggest settings from</span>
            </div>
            <div class="dt t1"><span v-for="t in tabs1" :key="t[1]" :style="{ width: t[2] + 'px' }"><svg class="ic" viewBox="0 0 16 16" v-html="icons[t[0]]"></svg><b>{{ t[1] }}</b></span></div>
            <div class="dt t2"><span v-for="(t, k) in tabs2" :key="t[1]" :class="{ sel: !k }" :style="{ width: t[2] + 'px' }"><svg class="ic" viewBox="0 0 16 16" v-html="icons[t[0]]"></svg><b>{{ t[1] }}</b></span></div>
            <div class="inner">
              <p class="ln">Post-processing the result surface</p>
              <div class="smooth"><span class="cb"></span><span class="sl">Pre-clipping smoothing iter</span><span class="dis">1</span></div>
              <p class="ln clip">Clipping</p>
              <div class="vals"><span>Values outside range:</span><svg class="ic" viewBox="0 0 16 16" v-html="icons.darrow"></svg></div>
              <div v-for="z in [['Max', '1'], ['Min', '-1']]" :key="z[0]" class="zr">
                <label>{{ z[0] }} Z-value:</label><span class="field dark sel2">Truncated<svg class="dd" viewBox="0 0 10 6"><path d="M1 1l4 4 4-4" stroke="#555" fill="none" stroke-width="1.200" /></svg></span>
                <span class="field dark num">{{ z[1] }}</span>
                <span class="cb"><svg viewBox="0 0 13 13"><path d="M2.500 6.500l3 3L11 3.500" /></svg></span><span class="pc">in % of input data</span>
              </div>
              <div class="vals v2"><svg class="ic" viewBox="0 0 16 16" v-html="icons.darrow"></svg></div>
              <div class="smooth s2"><span class="cb"></span><span class="sl">Post-clipping smoothing ite</span><span class="dis">1</span></div>
            </div>
          </div>
          <div class="foot">
            <span class="btn"><svg class="ic" viewBox="0 0 16 16" v-html="icons.ok"></svg>Apply</span>
            <span class="btn"><svg class="ic" viewBox="0 0 16 16" v-html="icons.ok"></svg>OK</span>
            <span class="btn"><svg class="ic" viewBox="0 0 16 16" v-html="icons.no"></svg>Cancel</span>
            <svg class="size" viewBox="0 0 8 8"><path d="M6 0h2v2H6zM3 3h2v2H3zM6 3h2v2H6zM0 6h2v2H0zM3 6h2v2H3zM6 6h2v2H6z" fill="#bbb" /></svg>
          </div>
        </div>
      </div>
    </main>

    <div class="bar low">
      <template v-for="(b, k) in bottomBar" :key="k">
        <span v-if="b.k === 'icon'" class="slot" :class="{ on: b.on }"><svg class="ic" viewBox="0 0 16 16" v-html="icons[b.n]"></svg></span>
        <span v-else-if="b.k === 'combo'" class="combo" :class="{ off: b.off }" :style="{ width: b.w + 'px' }"><span>{{ b.v }}</span><i></i></span>
        <span v-else-if="b.v" :class="b.k" :style="{ width: b.w + 'px' }">{{ b.v }}</span>
        <span v-else :class="b.k"></span>
      </template>
    </div>
    <footer class="status"><div></div></footer>
  </div>
</template>

<style>
html, body { margin: 0; background: #a9c6f7; overflow: hidden; }
</style>

<style scoped>
* { box-sizing: border-box; }
.app { width: 1822px; height: 1387px; display: flex; flex-direction: column; background: linear-gradient(90deg, #9ebef5, #acc9f8 1000px, #b2cdf9); font: 12px/14px "Liberation Mono", monospace; letter-spacing: -1.2px; color: #000; white-space: pre; overflow: hidden; }
svg { display: block; flex: none; overflow: visible; }
.ic { width: 16px; height: 16px; }
b, .b { font-weight: bold; letter-spacing: -.2px; }
.it { font-style: italic; }
.grip { flex: none; width: 10px; height: 15px; background: radial-gradient(circle at 50% 50%, #27408b 0 1.200px, transparent 1.300px) 2px 0 / 4px 4px repeat-y; }

.menu { height: 24px; display: flex; align-items: center; font: 12.500px/24px "Noto Sans", sans-serif; letter-spacing: -.1px; color: #14141e; flex: none; }
.logo { width: 14px; height: 16px; margin: 0 8px 0 1px; }
.mi { flex: none; }
.mi u { text-underline-offset: 2px; }

.bar { display: flex; align-items: center; height: 26px; flex: none; background: linear-gradient(#dbe8fd, #b9d1f8 50%, #83abe5); border-bottom: 1px solid #3c64a8; border-radius: 4px 3px 3px 0; letter-spacing: 0; }
.main { width: 1092px; padding-bottom: 3px; }
.low { width: 440px; height: 27px; }
.slot { width: 22px; height: 22px; flex: none; display: flex; align-items: center; justify-content: center; }
.slot.on { border: 1px solid #000080; background: linear-gradient(#ffd297, #ffb55c); }
.sep { width: 6px; height: 15px; flex: none; background: linear-gradient(90deg, transparent 2px, #6a8ccb 2px 3px, #f1f6ff 3px 4px, transparent 4px); }
.gap { width: 6px; flex: none; }
.caret { width: 16px; flex: none; display: flex; justify-content: center; }
.caret::after, .combo i::after { content: ""; border: 4px solid transparent; border-top: 5px solid #333; border-bottom: 0; }
.combo { height: 21px; flex: none; display: flex; justify-content: space-between; background: #fff; border: 1px solid #fff; font: 12px/19px "Noto Sans", sans-serif; padding-left: 3px; }
.combo i { width: 13px; display: flex; align-items: center; justify-content: center; background: linear-gradient(#d6e5fc, #9dbcec); }
.combo.off { background: #efefef; color: #9a9a9a; border-color: #e6edf8; }
.combo.off i { background: #bcd2f4; }
.combo.off i::after { border-top-color: #8c94a4; }
.z { font: bold 15px/20px "DejaVu Sans", sans-serif; color: #1c3f94; padding-left: 2px; letter-spacing: -1px; flex: none; }
.label { font: 12px/20px "Liberation Sans", sans-serif; padding-left: 2px; letter-spacing: -.3px; flex: none; }

.work { display: flex; height: 1289px; flex: none; }
.left { width: 303px; display: flex; flex-direction: column; background: #fff; }
.panel { display: flex; flex-direction: column; }
.head { height: 23px; flex: none; display: flex; align-items: center; background: linear-gradient(#dce9fd, #bcd3f8 50%, #88aee7); }
.head b { margin-left: 1px; flex: 1; }
.ctl { width: 50px; height: 16px; margin-right: 5px; }
.body { border: 1px solid #808890; margin-top: 1px; background: #fff; }
.top .body { height: 425px; }
.top .head { height: 22px; margin-bottom: 1px; }
.bot .head { margin-bottom: 0; }
.bot .body { height: 767px; }
.row { display: flex; align-items: center; height: 18px; }
.gut { width: 19px; height: 18px; }
.dot { stroke: #999; stroke-dasharray: 1 1; fill: none; }
.ck { width: 13px; height: 13px; margin: 0 6px 0 5px; flex: none; border: 1px solid #7c9cbc; background: linear-gradient(135deg, #dcdcdc, #f2f2f2); }
.ck svg { width: 13px; height: 13px; margin: -1px; }
.ck.none { border: 0; background: none; }
.ck.y, .ck.yon { background: #fbf7b4; }
.ck.radio { border: 1px solid #555; border-radius: 50%; background: radial-gradient(circle, #8a5ca0 0 2.500px, #f3ecb0 3px); }
.tabs { display: flex; height: 20px; margin: 2px 0 0 4px; flex: none; }
.bot .tabs { margin-top: 3px; }
.tab { display: flex; align-items: center; gap: 2px; padding-left: 2px; background: linear-gradient(#86abe4, #d6e6fd); border-top: 1px solid #777; border-right: 1px solid #000080; flex: none; height: 19px; }
.tab.act { border-right-color: #000; border-bottom: 1px solid #000; height: 20px; }
.split { height: 5px; border: 1px solid #000080; border-width: 1px 0; background: #c3d8fb; flex: none; }
.list .row { padding-left: 1px; }
.chev { width: 14px; height: 14px; margin-right: 5px; }
.navy { color: #00008b; }
.pi { margin: 0 4px 0 18px; }
.dim { opacity: .4; }
.gray { color: #858585; }
.vsplit { width: 5px; flex: none; border: 1px solid #000080; border-width: 0 1px; background: #c3d8fb; }
.view { position: relative; flex: 1; border-style: solid; border-width: 4px 0 4px 4px; border-color: #868686 #868686 #fff #868686; background: #000; }
.scene { width: 1510px; height: 1281px; }

.dlg { position: absolute; left: 1px; top: 445px; width: 534px; height: 545px; background: #f0f0f0; box-shadow: 0 0 0 1px #1c1c1c; display: flex; flex-direction: column; }
.dtitle { height: 31px; flex: none; background: #000; color: #fff; display: flex; align-items: center; padding: 0 10px 0 8px; font: 12.500px/30px "Noto Sans", sans-serif; letter-spacing: 0; }
.dtitle span { flex: 1; margin-left: 5px; }
.close { width: 10px; height: 10px; }
.run { width: 58px; height: 22px; margin: 3px 0 -1px 3px; background: #fff; border: 1px solid #dcdcdc; border-bottom: 0; padding: 3px 0 0 16px; position: relative; flex: none; }
.page { width: 527px; height: 459px; margin-left: 3px; background: #fff; border: 1px solid #dcdcdc; border-bottom: 0; display: flex; flex-direction: column; flex: none; }
.r0 { display: flex; padding-left: 107px; height: 15px; flex: none; }
.r0 span { width: 261px; }
.form { display: flex; height: 21px; flex: none; padding-left: 4px; align-items: center; }
.form label { width: 74px; flex: none; }
.btn, .nb { width: 22px; height: 20px; display: flex; align-items: center; justify-content: center; margin-right: 3px; flex: none; }
.btn { background: #e1e1e1; border: 1px solid #adadad; }
.field { width: 231px; height: 21px; border: 1px solid #ababb3; background: #fff; display: flex; align-items: center; padding-left: 4px; flex: none; }
.field .ic { margin-right: 5px; }
.form > .field:not(.name):not(.res) { margin-right: 4px; }
.field.res { width: 156px; }
.field.dark { border-color: #7a7a7a; }
.field em { font-style: normal; color: #c010b8; margin-left: 3px; flex: 1; }
.dd { width: 10px; height: 6px; margin-right: 4px; }
.cb { width: 13px; height: 13px; border: 1px solid #333; background: #fff; flex: none; }
.cb svg { width: 13px; height: 13px; margin: -1px; }
.cb path { fill: none; stroke: #444; stroke-width: 1.400; }
.fa { margin-top: 3px; height: 21px; align-items: flex-start; }
.fa label { padding-top: 3px; }
.fa .field { height: 19px; }
.fa .cb { margin: 5px 5px 0 -2px; }
.fa .nm { width: 34px; padding-top: 5px; }
.fa .field.name { width: 106px; height: 21px; margin-top: 2px; padding-left: 2px; }
.fb { margin-top: 0; }
.fb .cb { margin: 3px 5px 0 -2px; }
.two { line-height: 12px; }
.fb .two { width: 121px; margin-top: -2px; }
.q { width: 20px; height: 17px; margin-top: -5px; background: linear-gradient(135deg, #b8d8f8, #1c86e0); color: #fff; font: bold 15px/17px "Liberation Sans", sans-serif; text-align: center; border-left: 1px solid #888; }
.fc { margin-top: 3px; }
.fc label { margin-top: -5px; }
.fc .sug { width: 179px; margin: 2px 0 0 2px; position: relative; }
.sug i { position: absolute; left: 3px; top: 12px; border: 4px solid transparent; border-top: 4px solid #222; border-bottom: 0; }
.dt { display: flex; flex: none; }
.dt span { height: 19px; background: #f0f0f0; border: 1px solid #d9d9d9; border-bottom: 0; display: flex; align-items: center; padding-left: 4px; flex: none; }
.dt b { flex: 1; text-align: center; font-weight: normal; letter-spacing: -1.2px; }
.t1 { margin: 9px 0 0 8px; }
.t2 { margin: 0 0 0 6px; height: 19px; align-items: flex-end; }
.t2 span.sel { background: #fff; height: 22px; margin-bottom: -1px; padding-left: 2px; padding-bottom: 4px; position: relative; border-right: 0; }
.inner { width: 516px; height: 300px; margin-left: 6px; border: 1px solid #d9d9d9; border-bottom: 0; padding-left: 6px; flex: none; }
.ln { margin: 2px 0 0 1px; height: 14px; }
.smooth { display: flex; height: 21px; margin-top: 3px; align-items: center; }
.sl { width: 163px; margin-left: 4px; }
.dis { width: 92px; height: 21px; background: #f0f0f0; border: 1px solid #ccc; box-shadow: inset 0 0 0 1px #fff; color: #7d7d7d; padding: 2px 2px; }
.ln.clip { margin-top: 3px; }
.vals { display: flex; height: 15px; padding-left: 73px; align-items: center; }
.vals span { width: 141px; }
.vals .ic { height: 15px; }
.zr { display: flex; align-items: flex-start; height: 21px; }
.zr + .zr { margin-top: 3px; }
.zr label { width: 74px; padding: 2px 0 0 1px; }
.zr .field.sel2 { width: 92px; height: 19px; justify-content: space-between; }
.zr .field.num { width: 52px; margin-left: 30px; padding: 0 0 2px 2px; }
.zr .cb { margin: 3px 5px 0 123px; }
.zr .pc { padding-top: 2px; }
.v2 { padding-left: 214px; margin-top: 2px; }
.s2 { margin-top: 5px; }
.foot { display: flex; margin: 4px 0 0 272px; align-items: flex-start; }
.foot .btn { width: 73px; margin-right: 8px; justify-content: flex-start; padding-left: 4px; gap: 1px; }
.size { width: 8px; height: 8px; margin: 17px 0 0 9px; }

.status { flex: 1; border-top: 2px solid #7a9bd8; padding: 1px 0 1px 2px; background: #a6c3f3; display: flex; }
.status div { flex: 1; border: 1px solid #5c7fc0; border-right: 0; background: linear-gradient(#8fb2ea, #b7cff7); }
</style>
